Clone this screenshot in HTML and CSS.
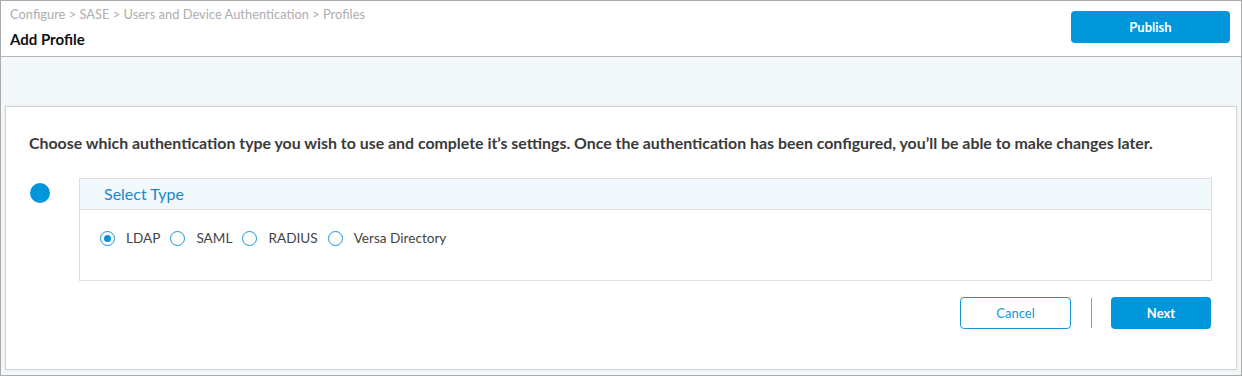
FILE: index.html
```html
<!DOCTYPE html>
<html lang="en">
<head>
    <meta charset="UTF-8">
    <title>Add Profile</title>
    <link rel="stylesheet" href="styles.css">
</head>
<body>
    <div class="page">
        <div class="topbar">
            <div class="titles">
                <div class="crumbs">Configure &gt; SASE &gt; Users and Device Authentication &gt; Profiles</div>
                <div class="title">Add Profile</div>
            </div>
            <button class="btn btn-primary btn-publish">Publish</button>
        </div>

        <div class="content">
            <div class="card">
                <p class="intro">Choose which authentication type you wish to use and complete it’s settings. Once the authentication has been configured, you’ll be able to make changes later.</p>

                <div class="step">
                    <span class="step-dot"></span>
                    <div class="panel">
                        <div class="panel-head">Select Type</div>
                        <div class="panel-body">
                            <label class="radio"><input type="radio" name="type" checked><span class="mark"></span>LDAP</label>
                            <label class="radio"><input type="radio" name="type"><span class="mark"></span>SAML</label>
                            <label class="radio"><input type="radio" name="type"><span class="mark"></span>RADIUS</label>
                            <label class="radio"><input type="radio" name="type"><span class="mark"></span>Versa Directory</label>
                        </div>
                    </div>
                </div>

                <div class="actions">
                    <button class="btn btn-outline">Cancel</button>
                    <span class="divider"></span>
                    <button class="btn btn-primary btn-next">Next</button>
                </div>
            </div>
        </div>
    </div>
</body>
</html>
```

FILE: styles.css
```css
* {
    margin: 0;
    padding: 0;
    box-sizing: border-box;
}

body {
    font-family: Lato, 'Open Sans', sans-serif;
    width: 1242px;
    height: 376px;
    overflow: hidden;
}

.page {
    width: 1242px;
    height: 376px;
    border: 1px solid #ababab;
    background: #f3f8fb;
    display: flex;
    flex-direction: column;
}

.topbar {
    height: 56px;
    background: white;
    border-bottom: 1px solid #b5b5b5;
    display: flex;
    justify-content: space-between;
    padding: 4px 11px 0 9px;
}

.crumbs {
    font-size: 12.9px;
    color: #aeaeae;
    line-height: 18px;
}

.title {
    font-size: 15px;
    font-weight: bold;
    color: #111;
    margin-top: 7px;
    line-height: 18px;
}

.btn {
    font-family: inherit;
    font-size: 13px;
    height: 32px;
    border-radius: 4px;
    cursor: pointer;
}

.btn-primary {
    background: #0096db;
    color: white;
    border: none;
    font-weight: bold;
}

.btn-publish {
    width: 159px;
    margin-top: 6px;
}

.content {
    flex: 1;
    padding: 49px 4px 4px 4px;
}

.card {
    height: 264px;
    background: white;
    border: 1px solid #d4d4d4;
    box-shadow: 0 0 3px rgba(0,0,0,0.08);
    padding: 25px 24px 0 23px;
}

.intro {
    font-size: 15.9px;
    font-weight: bold;
    color: #3a3a3a;
    line-height: 22px;
}

.step {
    display: flex;
    margin-top: 24px;
}

.step-dot {
    width: 20px;
    height: 20px;
    border-radius: 50%;
    background: #0096db;
    margin: 5px 29px 0 1px;
    flex-shrink: 0;
}

.panel {
    flex: 1;
    border: 1px solid #dcdfe2;
}

.panel-head {
    height: 31px;
    background: #f1f9fd;
    border-bottom: 1px solid #dcdfe2;
    color: #1a88c4;
    font-size: 16px;
    padding: 5px 0 0 24px;
}

.panel-body {
    height: 70px;
    display: flex;
    align-items: flex-start;
    padding: 20px 0 0 20px;
}

.radio {
    display: flex;
    align-items: center;
    font-size: 13.6px;
    color: #444;
    margin-right: 10px;
}

.radio input {
    display: none;
}

.mark {
    width: 15px;
    height: 15px;
    border: 1.3px solid #1a94d6;
    border-radius: 50%;
    margin-right: 11px;
    display: flex;
    align-items: center;
    justify-content: center;
}

.radio input:checked + .mark::after {
    content: '';
    width: 7px;
    height: 7px;
    border-radius: 50%;
    background: #0a8fd6;
}

.actions {
    display: flex;
    justify-content: flex-end;
    align-items: center;
    margin-top: 16px;
    padding-right: 1px;
}

.btn-outline {
    width: 111px;
    background: white;
    color: #1a94d6;
    border: 1px solid #1a94d6;
    font-weight: normal;
}

.divider {
    width: 1px;
    height: 30px;
    background: #999;
    margin: 0 19px 0 20px;
}

.btn-next {
    width: 100px;
}
```
